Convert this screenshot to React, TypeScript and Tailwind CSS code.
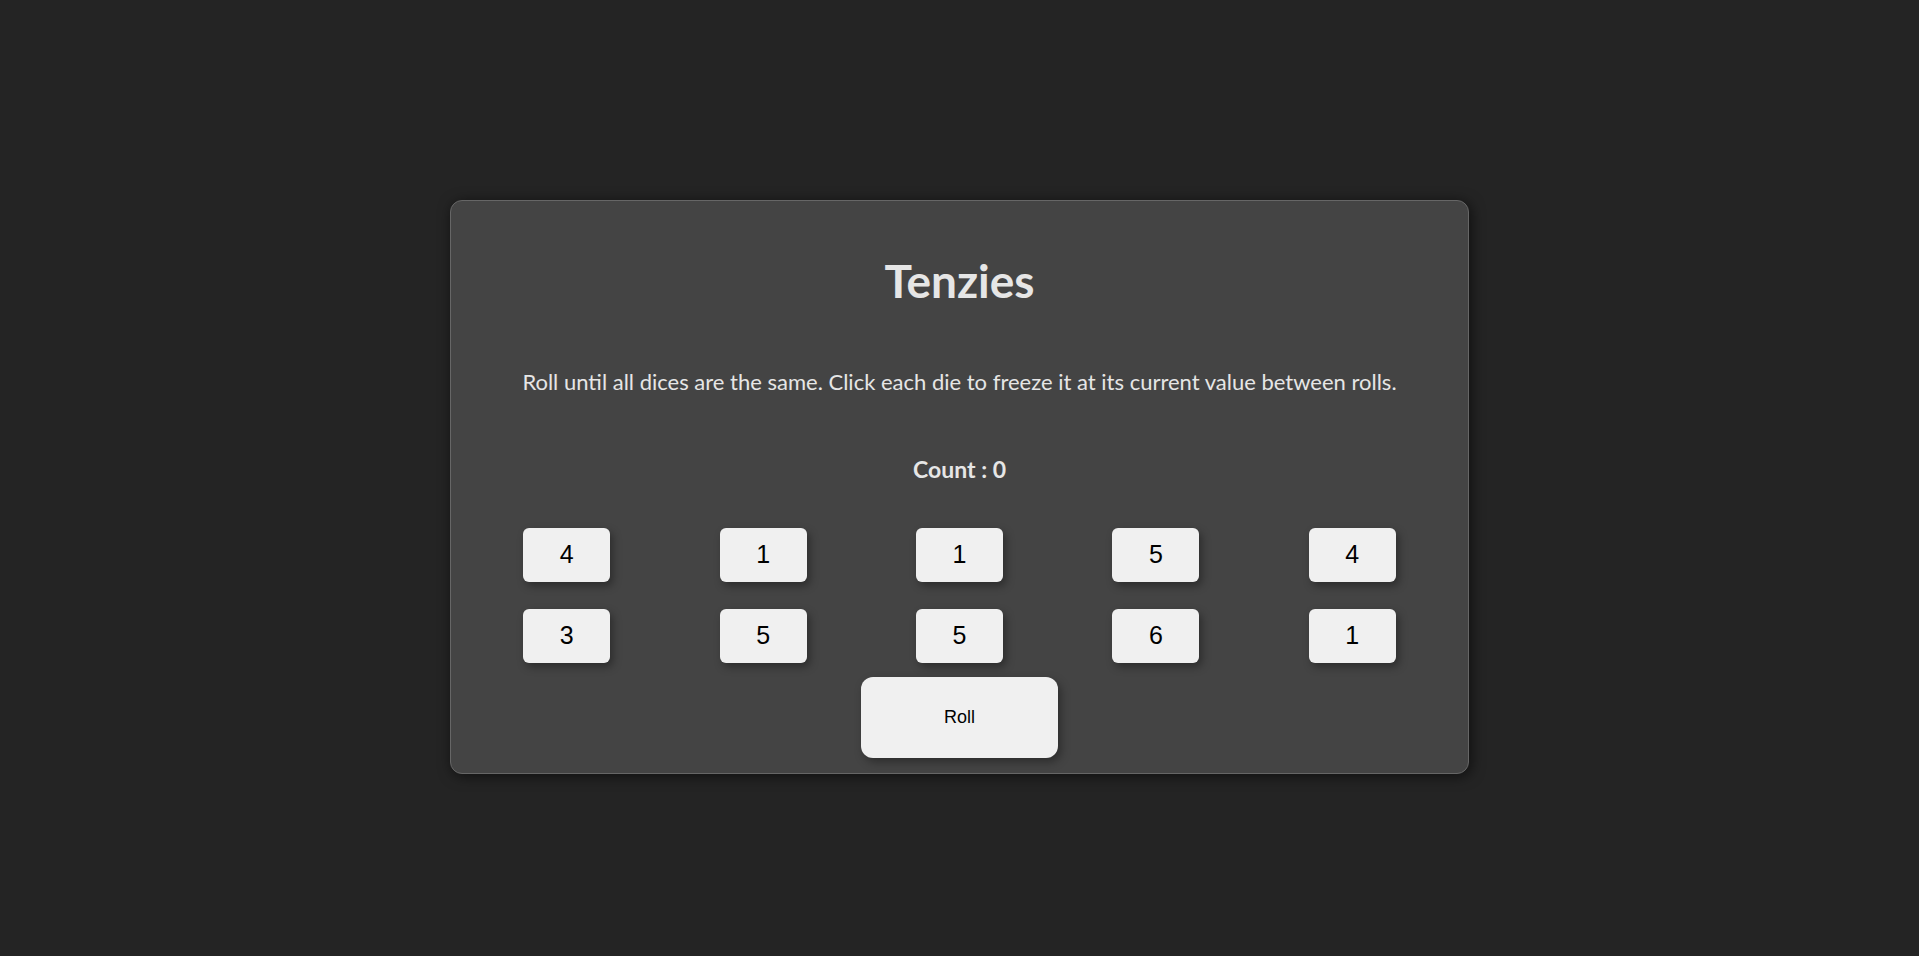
import React from "react";

const dice = [4, 1, 1, 5, 4, 3, 5, 5, 6, 1];

export default function App() {
  return (
    <div className="min-h-screen w-full bg-[#242424] pt-[200px]" style={{ fontFamily: "Lato, 'Open Sans', sans-serif" }}>
      <div className="mx-auto flex h-[574px] w-[1019px] flex-col items-center rounded-[12px] border border-[#666666] bg-[#444444] pt-[52px] shadow-[2px_2px_14px_rgba(0,0,0,0.6)]">
        <h1 className="text-[46px] font-bold leading-[56px] text-[#e6e6e6]">Tenzies</h1>
        <p className="mt-[58px] text-[22px] leading-[30px] text-[#e6e6e6]">
          Roll until all dices are the same. Click each die to freeze it at its current value between rolls.
        </p>
        <p className="mt-[58px] text-[23px] font-bold leading-[28px] text-[#e6e6e6]">Count : 0</p>
        <div className="mt-[45px] grid w-[982px] grid-cols-5 gap-y-[27px]">
          {dice.map((d, i) => (
            <div key={i} className="flex justify-center">
              <button
                className="flex h-[54px] w-[87px] items-center justify-center rounded-[6px] bg-[#f0f0f0] text-[25px] text-black shadow-[3px_4px_8px_rgba(0,0,0,0.35)]"
                style={{ fontFamily: "'Liberation Sans', Arial, sans-serif" }}
              >
                {d}
              </button>
            </div>
          ))}
        </div>
        <button
          className="mt-[14px] flex h-[81px] w-[197px] items-center justify-center rounded-[12px] bg-[#f0f0f0] text-[18px] text-black shadow-[3px_4px_10px_rgba(0,0,0,0.35)]"
          style={{ fontFamily: "'Liberation Sans', Arial, sans-serif" }}
        >
          Roll
        </button>
      </div>
    </div>
  );
}
